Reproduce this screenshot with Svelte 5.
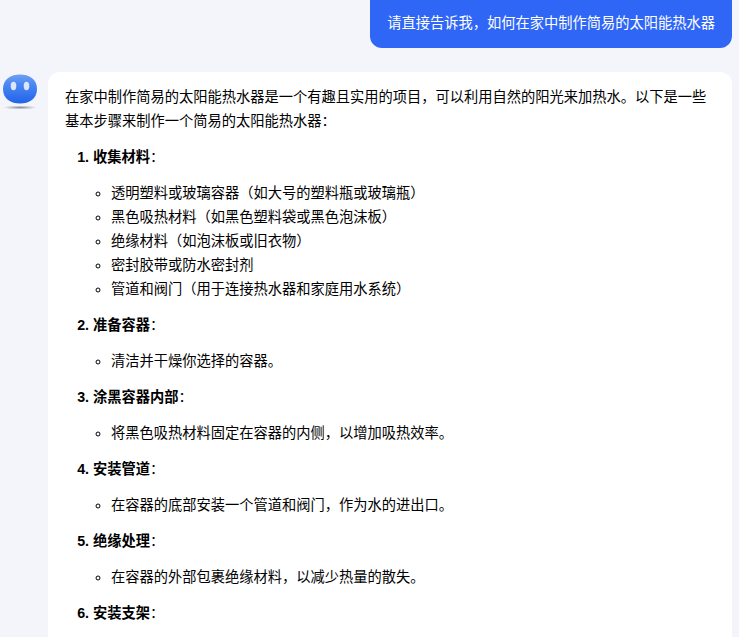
<script>
  const materials = [
    '透明塑料或玻璃容器（如大号的塑料瓶或玻璃瓶）',
    '黑色吸热材料（如黑色塑料袋或黑色泡沫板）',
    '绝缘材料（如泡沫板或旧衣物）',
    '密封胶带或防水密封剂',
    '管道和阀门（用于连接热水器和家庭用水系统）'
  ];
  const steps = [
    { title: '收集材料', items: materials },
    { title: '准备容器', items: ['清洁并干燥你选择的容器。'] },
    { title: '涂黑容器内部', items: ['将黑色吸热材料固定在容器的内侧，以增加吸热效率。'] },
    { title: '安装管道', items: ['在容器的底部安装一个管道和阀门，作为水的进出口。'] },
    { title: '绝缘处理', items: ['在容器的外部包裹绝缘材料，以减少热量的散失。'] },
    { title: '安装支架', items: [] }
  ];
</script>

<div class="page">
  <div class="user-row">
    <div class="user-bubble">请直接告诉我，如何在家中制作简易的太阳能热水器</div>
  </div>
  <div class="ai-row">
    <svg class="avatar" width="40" height="40" viewBox="0 0 40 40" aria-hidden="true">
      <defs>
        <linearGradient id="face" x1="0" y1="0" x2="0" y2="1">
          <stop offset="0" stop-color="#6fa0f6" />
          <stop offset="0.35" stop-color="#4a86f2" />
          <stop offset="1" stop-color="#2163ea" />
        </linearGradient>
        <radialGradient id="shade">
          <stop offset="0" stop-color="#8a8f9c" />
          <stop offset="1" stop-color="#f3f5fb" />
        </radialGradient>
      </defs>
      <path d="M20 2.5C29 2.5 37 7 37 17C37 27 29 31.500 20 31.500C11 31.500 3 27 3 17C3 7 11 2.500 20 2.500Z" fill="url(#face)" />
      <ellipse cx="13.500" cy="14" rx="2.800" ry="4.200" fill="#d9e6fc" />
      <ellipse cx="26.500" cy="14" rx="2.800" ry="4.200" fill="#d9e6fc" />
      <ellipse cx="20" cy="35.500" rx="17" ry="2" fill="url(#shade)" />
    </svg>
    <div class="ai-bubble">
      <p>在家中制作简易的太阳能热水器是一个有趣且实用的项目，可以利用自然的阳光来加热水。以下是一些基本步骤来制作一个简易的太阳能热水器：</p>
      <ol>
        {#each steps as step}
          <li>
            <p><strong>{step.title}</strong>：</p>
            {#if step.items.length}
              <ul>
                {#each step.items as item}
                  <li>{item}</li>
                {/each}
              </ul>
            {/if}
          </li>
        {/each}
      </ol>
    </div>
  </div>
</div>

<style>
  :global(html), :global(body) {
    margin: 0;
    overflow: hidden;
  }
  .page {
    height: 637px;
    overflow: hidden;
    box-sizing: border-box;
    background: #f3f5fb;
    padding: 0 7px 0 0;
    display: flex;
    flex-direction: column;
    font-family: "Liberation Sans", "Noto Sans CJK SC", sans-serif;
    font-size: 14.25px;
    line-height: 24px;
    color: #000;
  }
  .user-row {
    display: flex;
    justify-content: flex-end;
    margin-bottom: 24px;
  }
  .user-bubble {
    background: #2f66f6;
    color: #fff;
    padding: 0 17px;
    height: 48px;
    line-height: 47px;
    border-radius: 0 0 12px 12px;
  }
  .ai-row {
    flex: 1;
    display: flex;
    align-items: stretch;
    min-height: 0;
  }
  .avatar {
    flex: none;
    margin-right: 8px;
  }
  .ai-bubble {
    flex: 1;
    min-width: 0;
    background: #fff;
    border-radius: 12px 12px 0 0;
    padding: 13px 17px;
  }
  p {
    margin: 0;
  }
  ol {
    margin: 12px 0 0;
    padding: 0 0 0 28px;
  }
  ol > li + li {
    margin-top: 12px;
  }
  ul {
    margin: 12px 0 0;
    padding: 0 0 0 18px;
    list-style: circle;
  }
  ol > li::marker {
    font-weight: 700;
  }
</style>
